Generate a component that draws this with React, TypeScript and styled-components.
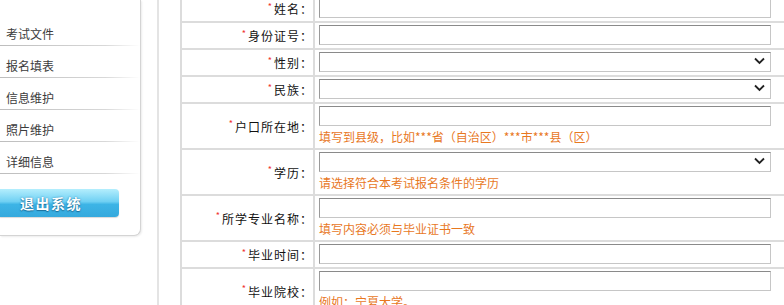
import styled, { createGlobalStyle } from "styled-components";

const GlobalStyle = createGlobalStyle`
body{
  margin:0;
  background:#fff;
  overflow:hidden;
  font-family:"Noto Sans CJK SC","Liberation Sans",sans-serif;
}
`;

const Page = styled.div`
display:flex;
align-items:flex-start;
width:784px;
height:305px;
overflow:hidden;
`;

const Sidebar = styled.div`
width:140px;
flex-shrink:0;
padding:14px 0 18px;
background:#fff;
border-right:1px solid #d4d4d4;
border-bottom:1px solid #d4d4d4;
border-bottom-right-radius:7px;
box-shadow:1px 1px 2px rgba(0,0,0,0.08);
`;

const MenuItem = styled.div`
height:32px;
box-sizing:border-box;
padding:13px 0 0 6px;
font-size:12px;
line-height:14px;
color:#3c3c3c;
background:linear-gradient(to right,#bdbdbd,#d8d8d8 75%,#fff) left bottom/100% 1px no-repeat;
`;

const Logout = styled.button`
display:block;
margin-top:15px;
width:119px;
height:28px;
border:none;
border-radius:0 4px 4px 0;
padding:0 0 0 20px;
text-align:left;
font-family:inherit;
font-size:14px;
font-weight:bold;
letter-spacing:1.5px;
color:#fff;
text-shadow:0 1px 1px #1d6f9a,0 0 2px #2a86b8;
background:linear-gradient(#b4eefd,#6fd0f3 45%,#3db4e6 55%,#35a9dd);
box-shadow:0 1px 1px rgba(0,0,0,0.15);
cursor:pointer;
`;

const Main = styled.div`
align-self:stretch;
margin-left:16px;
padding-left:21px;
border-left:2px solid #e4e4e4;
flex:1;
`;

const Form = styled.div`
margin-top:-4px;
width:640px;
border-left:2px solid #dcdcdc;
`;

const Row = styled.div`
display:grid;
grid-template-columns:133px 1fr;
border-bottom:2px solid #dcdcdc;
`;

const Label = styled.div`
display:flex;
align-items:center;
justify-content:flex-end;
padding-right:0;
border-right:2px solid #dcdcdc;
font-size:12px;
color:#111;
letter-spacing:1px;
`;

const Star = styled.span`
color:#f03030;
font-size:9px;
align-self:center;
margin-top:-5px;
margin-right:1px;
`;

const Value = styled.div`
padding:2px 4px 3px;
`;

const TextInput = styled.input`
display:block;
box-sizing:border-box;
width:452px;
height:20px;
margin:0;
border:1px solid #c6c6c6;
border-top-color:#8a8a8a;
border-left-color:#9a9a9a;
background:#fff;
`;

const SelectBox = styled.div`
position:relative;
width:452px;
height:20px;
`;

const Select = styled.select`
display:block;
box-sizing:border-box;
width:100%;
height:20px;
margin:0;
border:1px solid #c6c6c6;
border-top-color:#8a8a8a;
border-left-color:#9a9a9a;
background:#fff;
appearance:none;
`;

const Chevron = styled.svg`
position:absolute;
right:6px;
top:5px;
pointer-events:none;
`;

const Hint = styled.div`
padding-top:2px;
font-size:12px;
line-height:17px;
color:#e8781f;
white-space:nowrap;
`;

type Field = { label: string; kind: "input" | "select"; hint?: string };

const fields: Field[] = [
  { label: "姓名", kind: "input" },
  { label: "身份证号", kind: "input" },
  { label: "性别", kind: "select" },
  { label: "民族", kind: "select" },
  { label: "户口所在地", kind: "input", hint: "填写到县级，比如***省（自治区）***市***县（区）" },
  { label: "学历", kind: "select", hint: "请选择符合本考试报名条件的学历" },
  { label: "所学专业名称", kind: "input", hint: "填写内容必须与毕业证书一致" },
  { label: "毕业时间", kind: "input" },
  { label: "毕业院校", kind: "input", hint: "例如：宁夏大学。" },
];

const menu = ["考试文件", "报名填表", "信息维护", "照片维护", "详细信息"];

export default function App() {
  return (
    <>
      <GlobalStyle />
      <Page>
        <Sidebar>
          {menu.map((m) => (
            <MenuItem key={m}>{m}</MenuItem>
          ))}
          <Logout>退出系统</Logout>
        </Sidebar>
        <Main>
          <Form>
            {fields.map((f) => (
              <Row key={f.label}>
                <Label>
                  <Star>*</Star>
                  {f.label}：
                </Label>
                <Value>
                  {f.kind === "input" ? (
                    <TextInput type="text" />
                  ) : (
                    <SelectBox>
                      <Select defaultValue="">
                        <option value=""></option>
                      </Select>
                      <Chevron width="11" height="8" viewBox="0 0 11 8">
                        <path d="M1 1.5l4.5 4.5L10 1.5" fill="none" stroke="#222" strokeWidth="1.8" />
                      </Chevron>
                    </SelectBox>
                  )}
                  {f.hint && <Hint>{f.hint}</Hint>}
                </Value>
              </Row>
            ))}
          </Form>
        </Main>
      </Page>
    </>
  );
}
